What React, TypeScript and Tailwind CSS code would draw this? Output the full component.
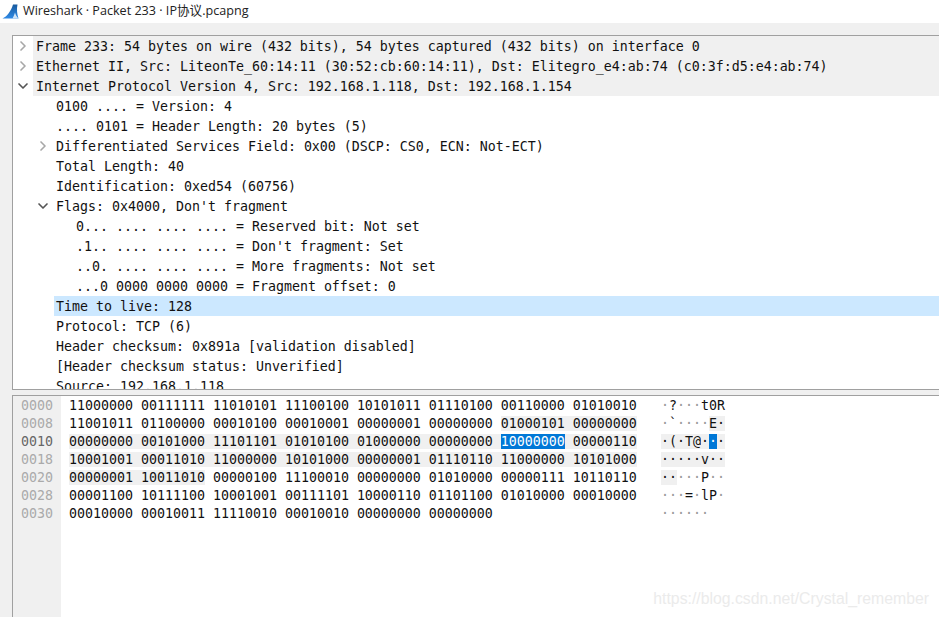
import { ChevronDown, ChevronRight } from "lucide-react";

interface TreeRow {
  text: string;
  level: 0 | 1 | 2;
  arrow?: "closed" | "open";
  protocol?: boolean;
  selected?: boolean;
}

const treeRows: TreeRow[] = [
  { text: "Frame 233: 54 bytes on wire (432 bits), 54 bytes captured (432 bits) on interface 0", level: 0, arrow: "closed", protocol: true },
  { text: "Ethernet II, Src: LiteonTe_60:14:11 (30:52:cb:60:14:11), Dst: Elitegro_e4:ab:74 (c0:3f:d5:e4:ab:74)", level: 0, arrow: "closed", protocol: true },
  { text: "Internet Protocol Version 4, Src: 192.168.1.118, Dst: 192.168.1.154", level: 0, arrow: "open", protocol: true },
  { text: "0100 .... = Version: 4", level: 1 },
  { text: ".... 0101 = Header Length: 20 bytes (5)", level: 1 },
  { text: "Differentiated Services Field: 0x00 (DSCP: CS0, ECN: Not-ECT)", level: 1, arrow: "closed" },
  { text: "Total Length: 40", level: 1 },
  { text: "Identification: 0xed54 (60756)", level: 1 },
  { text: "Flags: 0x4000, Don't fragment", level: 1, arrow: "open" },
  { text: "0... .... .... .... = Reserved bit: Not set", level: 2 },
  { text: ".1.. .... .... .... = Don't fragment: Set", level: 2 },
  { text: "..0. .... .... .... = More fragments: Not set", level: 2 },
  { text: "...0 0000 0000 0000 = Fragment offset: 0", level: 2 },
  { text: "Time to live: 128", level: 1, selected: true },
  { text: "Protocol: TCP (6)", level: 1 },
  { text: "Header checksum: 0x891a [validation disabled]", level: 1 },
  { text: "[Header checksum status: Unverified]", level: 1 },
  { text: "Source: 192.168.1.118", level: 1 },
];

const hexRows: { offset: string; bytes: string[]; ascii: string }[] = [
  { offset: "0000", bytes: ["11000000", "00111111", "11010101", "11100100", "10101011", "01110100", "00110000", "01010010"], ascii: "·?···t0R" },
  { offset: "0008", bytes: ["11001011", "01100000", "00010100", "00010001", "00000001", "00000000", "01000101", "00000000"], ascii: "·`····E·" },
  { offset: "0010", bytes: ["00000000", "00101000", "11101101", "01010100", "01000000", "00000000", "10000000", "00000110"], ascii: "·(·T@···" },
  { offset: "0018", bytes: ["10001001", "00011010", "11000000", "10101000", "00000001", "01110110", "11000000", "10101000"], ascii: "·····v··" },
  { offset: "0020", bytes: ["00000001", "10011010", "00000100", "11100010", "00000000", "01010000", "00000111", "10110110"], ascii: "·····P··" },
  { offset: "0028", bytes: ["00001100", "10111100", "10001001", "00111101", "10000110", "01101100", "01010000", "00010000"], ascii: "···=·lP·" },
  { offset: "0030", bytes: ["00010000", "00010011", "11110010", "00010010", "00000000", "00000000"], ascii: "······" },
];

// IP header is bytes 14-33, ttl is byte 22
const inHeader = (i: number) => i >= 14 && i <= 33;
const isTtl = (i: number) => i === 22;

function SharkFin() {
  return (
    <svg width="17" height="15" viewBox="0 0 17 15" className="shrink-0">
      <defs>
        <linearGradient id="fin" x1="0" y1="0" x2="0" y2="1">
          <stop offset="0" stopColor="#175a9e" />
          <stop offset="1" stopColor="#2f8ae6" />
        </linearGradient>
      </defs>
      <path d="M0.5 14.5 C5 12.5 9 7 11 0.5 L15.5 0.5 C14.5 5 15 10 16.5 14.5 Z" fill="url(#fin)" />
      <path d="M10.5 14.5 C11.5 12.5 12.5 10.5 13 8.5 C13.5 10.5 14.5 12.5 16.5 14.5 Z" fill="#cfe4f7" />
    </svg>
  );
}

function Tree() {
  return (
    <div className="h-[355px] overflow-hidden border border-r-0 border-[#a0a0a0] bg-white">
      {treeRows.map((row, index) => (
        <div key={index} className="relative h-5 whitespace-pre">
          {row.arrow && (
            <span
              className={`absolute top-[2px] ${row.level === 0 ? "left-[2px]" : "left-[22px]"} ${
                row.arrow === "open" ? "text-[#555555]" : "text-[#a8a8a8]"
              }`}
            >
              {row.arrow === "open" ? (
                <ChevronDown size={16} strokeWidth={2.5} />
              ) : (
                <ChevronRight size={16} strokeWidth={2.5} />
              )}
            </span>
          )}
          <div
            className={`h-5 leading-[21px] ${
              row.level === 0 ? "ml-[20px] pl-[3px]" : row.level === 1 ? "ml-[41px] pl-[2px]" : "ml-[61px] pl-[2px]"
            } ${row.protocol ? "bg-[#f0f0f0]" : ""} ${row.selected ? "bg-[#cce8ff]" : ""}`}
          >
            {row.text}
          </div>
        </div>
      ))}
    </div>
  );
}

function HexDump() {
  return (
    <div className="mt-[5px] flex flex-1 border border-r-0 border-b-0 border-[#a0a0a0] bg-white">
      <div className="w-12 bg-[#f0f0f0] pl-2">
        {hexRows.map((row) => (
          <div key={row.offset} className={`h-[18px] leading-[19px] ${row.offset === "0010" ? "text-[#666666]" : "text-[#aaaaaa]"}`}>
            {row.offset}
          </div>
        ))}
      </div>
      <div className="pl-2">
        {hexRows.map((row, r) => (
          <div key={row.offset} className="flex h-[18px] leading-[19px] whitespace-pre">
            <div className="w-[568px]">
              {row.bytes.map((byte, b) => {
                const i = r * 8 + b;
                return (
                  <span key={b}>
                    <span className={isTtl(i) ? "bg-[#0078d7] text-white" : inHeader(i) ? "bg-[#f0f0f0]" : ""}>{byte}</span>
                    {b < 7 && <span className={inHeader(i) && inHeader(i + 1) ? "bg-[#f0f0f0]" : ""}> </span>}
                  </span>
                );
              })}
            </div>
            <div className="ml-6">
              {row.ascii.split("").map((ch, b) => {
                const i = r * 8 + b;
                return (
                  <span
                    key={b}
                    className={
                      isTtl(i)
                        ? "bg-[#0078d7] text-white"
                        : inHeader(i)
                          ? "bg-[#f0f0f0]"
                          : ch === "·"
                            ? "text-[#999999]"
                            : ""
                    }
                  >
                    {ch}
                  </span>
                );
              })}
            </div>
          </div>
        ))}
      </div>
    </div>
  );
}

export default function App() {
  return (
    <div className="relative flex h-screen w-full flex-col overflow-hidden bg-[#f0f0f0]">
      <div className="flex h-[23px] items-center gap-[4px] bg-white pl-[2px] font-['Open_Sans','Noto_Sans_CJK_SC',sans-serif] text-[12.6px] text-[#222222]">
        <SharkFin />
        <span>Wireshark · Packet 233 · IP协议.pcapng</span>
      </div>
      <div className="flex flex-1 flex-col pt-3 pl-3 font-['DejaVu_Sans_Mono',monospace] text-[13.29px] text-[#111111]">
        <Tree />
        <HexDump />
      </div>
      <span className="absolute right-[10px] bottom-[8px] font-['Liberation_Sans',sans-serif] text-[15.8px] leading-5 text-[#ebebeb]">
        https://blog.csdn.net/Crystal_remember
      </span>
    </div>
  );
}
